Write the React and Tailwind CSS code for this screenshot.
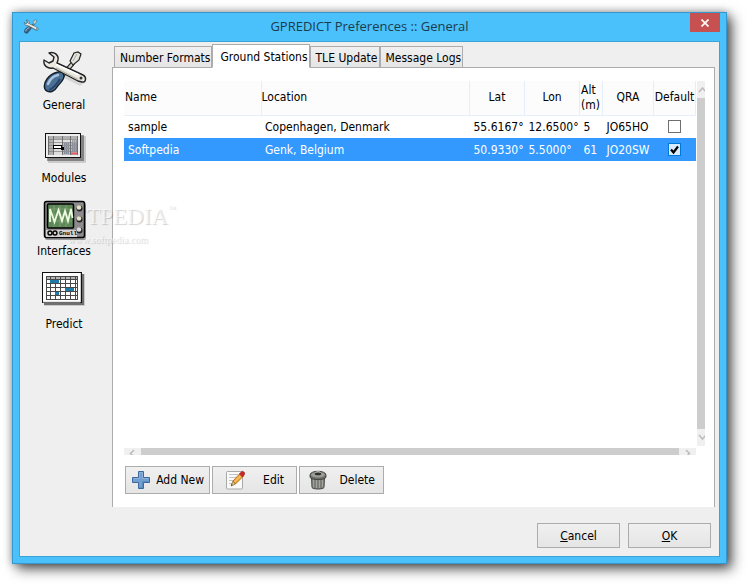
import React, { useState } from 'react';
import clsx from 'clsx';

const SECTIONS = [
  { id: 'general', label: 'General', Icon: ToolsIcon },
  { id: 'modules', label: 'Modules', Icon: ModulesIcon },
  { id: 'interfaces', label: 'Interfaces', Icon: ScopeIcon },
  { id: 'predict', label: 'Predict', Icon: PredictIcon },
];

const TABS = ['Number Formats', 'Ground Stations', 'TLE Update', 'Message Logs'];

const STATIONS = [
  { name: 'sample', location: 'Copenhagen, Denmark', lat: '55.6167°', lon: '12.6500°', alt: '5', qra: 'JO65HO' },
  { name: 'Softpedia', location: 'Genk, Belgium', lat: '50.9330°', lon: '5.5000°', alt: '61', qra: 'JO20SW' },
];

export default function App() {
  const [tab, setTab] = useState('Ground Stations');

  return (
    <div className="flex min-h-screen bg-white pt-3 pr-5 pb-5 pl-3 font-['DejaVu_Sans_Condensed','Open_Sans',sans-serif] text-xs text-black">
      <div className="flex flex-1 flex-col border border-[#3498cc] bg-[#4ac1fb] px-1.5 pb-1.5 shadow-[5px_5px_12px_rgba(0,0,0,0.65),0_0_8px_rgba(0,0,0,0.3)]">
        <TitleBar title="GPREDICT Preferences :: General" />

        <div className="flex flex-1 flex-col border border-[#3da2d6] bg-[#efefef]">
          <div className="flex flex-1">
            <Sidebar />
            <main className="mr-1 flex min-w-0 flex-1 flex-col pt-0.5">
              <TabBar active={tab} onSelect={setTab} />
              <section className="flex flex-1 flex-col border-x border-t border-[#acacac] bg-white pt-[13px] pr-[9px] pb-[13px] pl-[11px]">
                <StationList />
                <div className="mt-[11px] flex gap-0.5 pl-px">
                  <ActionButton label="Add New" Icon={PlusIcon} className="px-[5px]" />
                  <ActionButton label="Edit" Icon={EditIcon} className="px-3" />
                  <ActionButton label="Delete" Icon={TrashIcon} className="px-2" />
                </div>
              </section>
            </main>
          </div>

          <footer className="flex justify-end gap-2 px-2 pt-4 pb-2">
            <DialogButton hotkey="C" rest="ancel" />
            <DialogButton hotkey="O" rest="K" />
          </footer>
        </div>
      </div>
    </div>
  );
}

function TitleBar({ title }) {
  return (
    <header className="relative flex h-7 items-center justify-center">
      <span className="absolute top-1.5 left-1">
        <ToolsIcon className="size-4" />
      </span>
      <h1 className="font-['Open_Sans',sans-serif] text-[13px] text-[#1d3b4b]">{title}</h1>
      <button
        aria-label="Close"
        className="absolute top-0 right-0 flex h-[19px] w-[30px] items-center justify-center bg-[#c75050]"
      >
        <svg className="size-2" viewBox="0 0 8 8" aria-hidden="true">
          <path d="M.5 .5 7.5 7.5M7.5 .5 .5 7.5" stroke="#fff" strokeWidth="1.7" />
        </svg>
      </button>
    </header>
  );
}

function Sidebar() {
  return (
    <nav className="relative mr-1 flex w-[88px] flex-col gap-2 pt-[7px]">
      {SECTIONS.map(({ id, label, Icon }) => (
        <button key={id} className="flex flex-col items-center leading-[17px]">
          <span className="relative z-20">
            <Icon className="size-12" />
          </span>
          {label}
        </button>
      ))}
      <Watermark />
    </nav>
  );
}

function Watermark() {
  return (
    <div
      aria-hidden="true"
      className="pointer-events-none absolute top-[161px] left-6 z-10 font-['Liberation_Serif',serif] text-white/60 [text-shadow:1px_1px_1px_rgba(0,0,0,0.18)]"
    >
      <div className="flex items-start text-[23px] leading-7">
        SOFTPEDIA<span className="text-[8px] leading-3">™</span>
      </div>
      <div className="pt-px pl-6 text-[10px] leading-4">www.softpedia.com</div>
    </div>
  );
}

function TabBar({ active, onSelect }) {
  return (
    <div role="tablist" className="-mb-px flex items-end pl-0.5">
      {TABS.map((name) => (
        <button
          key={name}
          role="tab"
          aria-selected={name === active}
          onClick={() => onSelect(name)}
          className={clsx(
            'border border-[#acacac] whitespace-nowrap',
            name === active
              ? 'relative h-6 border-b-white bg-white pt-0.5 pr-px pl-[7px]'
              : 'h-[22px] bg-linear-to-b from-[#f0f0f0] to-[#e5e5e5] pt-0.5 pr-px pl-[5px]'
          )}
        >
          {name}
        </button>
      ))}
    </div>
  );
}

function StationList() {
  const [home, setHome] = useState('Softpedia');

  return (
    <div className="grid flex-1 grid-cols-[minmax(0,1fr)_8px] grid-rows-[1fr_7px] gap-x-px gap-y-0.5">
      <div>
        <table className="w-full table-fixed border-collapse">
          <colgroup>
            <col className="w-[137px]" />
            <col />
            <col className="w-[55px]" />
            <col className="w-[55px]" />
            <col className="w-[23px]" />
            <col className="w-[51px]" />
            <col className="w-[42px]" />
          </colgroup>
          <thead>
            <tr className="h-[34px] border-b border-[#e5eefb] bg-[#fcfcfc] leading-[15px] *:border-r *:border-[#e5eefb] *:p-0 *:font-normal">
              <th className="text-left">
                <span className="pl-px">Name</span>
              </th>
              <th className="text-left">Location</th>
              <th>Lat</th>
              <th>Lon</th>
              <th className="text-left">
                <div className="pl-px">Alt (m)</div>
              </th>
              <th>QRA</th>
              <th className="whitespace-nowrap">Default</th>
            </tr>
          </thead>
          <tbody>
            {STATIONS.map((s) => (
              <tr
                key={s.name}
                className={clsx(
                  'h-[23px] whitespace-nowrap *:p-0 [&>td:not(:last-child)]:pl-1',
                  home === s.name && 'bg-[#3399ff] text-white'
                )}
              >
                <td>{s.name}</td>
                <td>{s.location}</td>
                <td>{s.lat}</td>
                <td>{s.lon}</td>
                <td>{s.alt}</td>
                <td>{s.qra}</td>
                <td>
                  <DefaultCheck name={s.name} checked={home === s.name} onChange={() => setHome(s.name)} />
                </td>
              </tr>
            ))}
          </tbody>
        </table>
      </div>

      {/* vertical scrollbar */}
      <div className="flex flex-col bg-[#f0f0f0]">
        <ScrollArrow className="h-[17px] w-2" d="M2 11 5.5 7 9 11" box="0 0 8 17" />
        <div className="flex-1 bg-[#cdcdcd]" />
        <ScrollArrow className="h-[17px] w-2" d="M2 6 5.5 10 9 6" box="0 0 8 17" />
      </div>

      {/* horizontal scrollbar */}
      <div className="flex bg-[#f0f0f0]">
        <ScrollArrow className="h-[7px] w-[17px]" d="M10 2 6.5 5.5 10 9" box="0 0 17 7" />
        <div className="flex-1 bg-[#cdcdcd]" />
        <ScrollArrow className="h-[7px] w-[17px]" d="M7 2 10.5 5.5 7 9" box="0 0 17 7" />
      </div>
    </div>
  );
}

function DefaultCheck({ name, checked, onChange }) {
  return (
    <label className="relative flex items-center justify-center">
      <input
        type="checkbox"
        aria-label={`Use ${name} as default`}
        checked={checked}
        onChange={onChange}
        className="size-[13px] appearance-none border border-[#707070] bg-white checked:border-[#0078d7] checked:bg-[#d9ecff]"
      />
      {checked && (
        <svg className="pointer-events-none absolute size-[13px]" viewBox="0 0 13 13" aria-hidden="true">
          <path d="M3 6.5 5.5 9.5 10 3.5" fill="none" stroke="#000" strokeWidth="2.2" />
        </svg>
      )}
    </label>
  );
}

function ScrollArrow({ className, d, box }) {
  return (
    <svg className={className} viewBox={box} aria-hidden="true">
      <path d={d} fill="none" stroke="#bdbdbd" strokeWidth="1.6" />
    </svg>
  );
}

function ActionButton({ label, Icon, className }) {
  return (
    <button
      className={clsx(
        'flex h-7 w-[85px] items-center justify-between border border-[#acacac] bg-linear-to-b from-[#f0f0f0] to-[#e5e5e5]',
        className
      )}
    >
      <Icon className="size-5 shrink-0" />
      {label}
    </button>
  );
}

function DialogButton({ hotkey, rest }) {
  return (
    <button className="h-[25px] w-[83px] border border-[#acacac] bg-linear-to-b from-[#f0f0f0] to-[#e5e5e5]">
      <span className="underline underline-offset-1">{hotkey}</span>
      {rest}
    </button>
  );
}

// Crossed wrench and screwdriver
function ToolsIcon({ className }) {
  return (
    <svg className={className} viewBox="0 0 48 48" aria-hidden="true">
      <path d="M22 22 44 34 40 37 20 27Z" fill="#000" opacity=".1" />
      <path d="M21 28 33 14" stroke="#222" strokeWidth="4.5" />
      <path d="M21 28 33 14" stroke="#d6d6ce" strokeWidth="2.2" />
      <path d="M30 12 34 4 38 3 41 5 39 11 33 16Z" fill="#e4e4dc" stroke="#222" strokeWidth="1.2" />
      <path d="M33 12 37 5" stroke="#aaa" strokeWidth="1" />
      <path
        d="M18 23c3-1 6 1 6 4 0 4-4 7-7 11-2 4-7 6-10 4-4-2-3-8 0-12 3-4 6-6 11-7Z"
        fill="#4a7096"
        stroke="#151d28"
        strokeWidth="1.4"
      />
      <path d="M8 35c2-5 6-8 10-9" stroke="#a9c5de" strokeWidth="2.5" fill="none" strokeLinecap="round" />
      <path d="M9 41c5-2 8-6 11-11" stroke="#27466a" strokeWidth="2" fill="none" />
      <path
        d="M9 4c5-2 10 2 9 7l-1 3 26 12c4 2 3 8-1 7l-4-1-25-13c-5 1-10-2-9-8l5 3 4-2 1-4Z"
        fill="#eae8df"
        stroke="#222"
        strokeWidth="1.4"
        strokeLinejoin="round"
      />
      <path d="M16 15.5 39 26" stroke="#fff" strokeWidth="1.8" />
      <path d="M16 19 38 30.5" stroke="#b4b2a8" strokeWidth="1.2" />
      <circle cx="41" cy="29" r="1.5" fill="#333" />
    </svg>
  );
}

// Spreadsheet-like layout table
function ModulesIcon({ className }) {
  return (
    <svg className={className} viewBox="0 0 48 48" aria-hidden="true">
      <rect x="8" y="14" width="38" height="27" rx="1" fill="#000" opacity=".15" />
      <rect x="7" y="13" width="37" height="26" fill="#000" opacity=".35" />
      <rect x="5.5" y="11.5" width="35" height="24" fill="#eee" stroke="#111" />
      <rect x="8" y="14" width="30" height="19" fill="#dedede" />
      <path d="M8 14h30v3H8zM8 17h5v16H8z" fill="#b0b0b0" />
      <path d="M23 21h14v12H23z" fill="#b9bdc7" />
      <path d="M8 17.500h30M8 20.500h30M8 23.500h30M8 26.500h30M8 29.500h30" stroke="#808080" strokeWidth=".7" />
      <path d="M8.500 14v19M13.500 14v19M22.500 14v19M30.500 14v19M37.500 14v19" stroke="#666" strokeWidth=".9" />
      <path
        d="M24 22h5M32 19h5M24 25h5M32 22h5M24 28h5M32 25h5M24 31h5M32 28h5"
        stroke="#535a6b"
        strokeDasharray="1.5 .5"
      />
      <path d="M31 31.500h6" stroke="#e25d5d" strokeWidth="2" />
      <rect x="13.5" y="23.5" width="8" height="3" fill="#fff" stroke="#000" />
      <rect x="21" y="25" width="3" height="3" fill="#000" />
    </svg>
  );
}

// Oscilloscope
function ScopeIcon({ className }) {
  return (
    <svg className={className} viewBox="0 0 48 48" aria-hidden="true">
      <rect x="5" y="8" width="41" height="37" rx="2" fill="#000" opacity=".35" />
      <rect x="4.5" y="6.5" width="40" height="36" rx="2" fill="#8d8b8d" stroke="#000" strokeWidth="1.5" />
      <path d="M6 35h31v7H6z" fill="#d5d0d4" />
      <rect x="7.5" y="9" width="26" height="24" rx="1" fill="#5d8758" stroke="#000" strokeWidth="1.5" />
      <path d="M9 14h23M9 20h23M9 26h23M14 10v22M20 10v22M26 10v22" stroke="#8bab77" strokeWidth=".7" />
      <path
        d="M10 27V14l4.500 13 4-12 3.500 11 3-10 3 10 3-12 1.500 9"
        fill="none"
        stroke="#eefbe2"
        strokeWidth="1.8"
      />
      <circle cx="39.5" cy="13.5" r="3" fill="#222" />
      <circle cx="39" cy="12.5" r="2.3" fill="#e6e3c8" />
      <circle cx="39.5" cy="24.5" r="3" fill="#222" />
      <circle cx="39" cy="23.5" r="2.3" fill="#e6e3c8" />
      <circle cx="39.5" cy="35.5" r="3" fill="#222" />
      <circle cx="39" cy="34.5" r="2.3" fill="#ddd" />
      <circle cx="10" cy="38" r="2" fill="#ccc" stroke="#000" strokeWidth="1.4" />
      <circle cx="15" cy="38" r="2" fill="#ccc" stroke="#000" strokeWidth="1.4" />
      <text x="19" y="40" fontSize="6" fontWeight="bold" fontFamily="Liberation Mono, monospace">
        Gnull
      </text>
    </svg>
  );
}

// Pass timeline grid
function PredictIcon({ className }) {
  return (
    <svg className={className} viewBox="0 0 48 48" aria-hidden="true">
      <rect x="4" y="6" width="41" height="32" fill="#000" opacity=".15" />
      <rect x="4" y="6" width="40" height="31" fill="#000" opacity=".45" />
      <rect x="2.5" y="4.5" width="39" height="30" fill="#fff" stroke="#111" />
      <path d="M40.500 5v29H3" fill="none" stroke="#ccc" />
      <rect x="6" y="8" width="32" height="24" fill="#484848" />
      <path d="M7 10h30" stroke="#b5b5b5" strokeWidth="2" strokeDasharray="4 1" strokeDashoffset="1" />
      {[13.5, 17.5, 21.5, 25.5, 29.5].map((y) => (
        <path key={y} d={`M7 ${y}h30`} stroke="#fff" strokeWidth="3" strokeDasharray="4 1" strokeDashoffset="1" />
      ))}
      <path d="M10 12h9v3h-9zM25 20h9v3h-9zM15 24h4v3h-4z" fill="#1f7aa8" />
    </svg>
  );
}

function PlusIcon({ className }) {
  return (
    <svg className={className} viewBox="0 0 20 20" aria-hidden="true">
      <path
        d="M7.500 1.500h5v6h6v5h-6v6h-5v-6h-6v-5h6z"
        fill="#729fcf"
        stroke="#3c689f"
        strokeLinejoin="round"
      />
      <path d="M8.500 2.500h3v6h6M2.500 8.500h6v-6" fill="none" stroke="#8db2da" />
      <path d="M8.500 17.500h3v-6h6" fill="none" stroke="#5c8abf" />
    </svg>
  );
}

function EditIcon({ className }) {
  return (
    <svg className={className} viewBox="0 0 20 20" aria-hidden="true">
      <rect x="1.5" y="1.5" width="16" height="17.5" rx="1" fill="#fafafa" stroke="#a9a9a9" />
      <path d="M4 4.500h9M4 7.500h7M4 10.500h5M4 13.500h4" stroke="#c2c2c2" />
      <path d="M6 16 8 11 10.500 14Z" fill="#e9cfa0" stroke="#7a5b28" strokeWidth=".7" />
      <path d="M8 11 15 3.500 18 6.500 10.500 14Z" fill="#f3a536" stroke="#a8620d" strokeWidth=".8" />
      <path d="M9.500 12 16.500 5" stroke="#fcd58b" strokeWidth="1" />
      <path d="M14.500 4 16.500 1.800c1.500-1.200 4 .8 2.800 2.800L17.500 7Z" fill="#cf2727" stroke="#8d1515" strokeWidth=".7" />
      <path d="M6 16 7.500 14.500 6.800 14Z" fill="#222" />
    </svg>
  );
}

function TrashIcon({ className }) {
  return (
    <svg className={className} viewBox="0 0 20 20" aria-hidden="true">
      <path d="M3.500 7h13l-.5 10.500c-1 2-11 2-12 0Z" fill="#858782" stroke="#464743" />
      <path d="M5.500 9v8M8.500 10v8M11.500 10v8M14.500 9v8" stroke="#a3a49f" />
      <path d="M7 10v8M10 10v8M13 10v8" stroke="#72746f" />
      <path d="M2 5c0-5 16-5 16 0v2c0 3.500-16 3.500-16 0Z" fill="#6b6d68" stroke="#353632" strokeWidth=".8" />
      <ellipse cx="10" cy="4.8" rx="7" ry="2.8" fill="#9b9d97" />
      <ellipse cx="10" cy="3.8" rx="3.2" ry="1.5" fill="#30312e" />
      <path d="M7.500 2.500c1-1 4-1 5 0" stroke="#d3d4d0" fill="none" />
    </svg>
  );
}
